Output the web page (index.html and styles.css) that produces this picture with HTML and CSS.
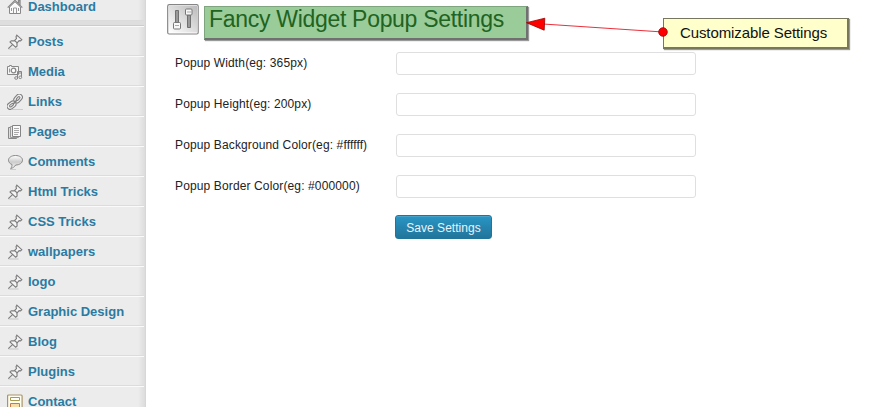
FILE: index.html
```html
<!DOCTYPE html>
<html lang="en">
<head>
<meta charset="utf-8">
<title>Fancy Widget Popup Settings</title>
<link rel="stylesheet" href="styles.css">
</head>
<body>
<svg class="defs" width="0" height="0" aria-hidden="true">
  <symbol id="pin" viewBox="0 0 16 16">
    <path d="M1.500 15h10" stroke="#c4c4c4"/>
    <path d="M9.800 1.200l5 4.500-1.300 1.100-1.400-.2-2.200 2.500.2 2.900-1.400 1.300L3 7.900l1.300-1.200 2.800.2 2.400-2.300-.5-1.900z" fill="#f4f4f4" stroke="#7c7c7c" stroke-width="1.100"/>
    <path d="M7.500 6.500l3 2.700M5.800 10.400L1.300 14.600" stroke="#7c7c7c" stroke-width="1.100" fill="none"/>
  </symbol>
</svg>
<div class="layout">
  <nav class="menu">
    <a class="item first"><svg class="icon" viewBox="0 0 16 16"><path d="M2.500 8v6.500h11V8L8 2.800z" fill="#fafafa" stroke="#888"/><path d="M.7 8.600L8 1.400l7.300 7.200M11.500 4V1.500h1.500V6" fill="none" stroke="#888" stroke-width="1.300"/><path d="M6.500 14V9h3v5M4.500 9v3M11.500 9v3" fill="none" stroke="#999"/></svg>Dashboard</a>
    <div class="separator"></div>
    <a class="item"><svg class="icon"><use href="#pin"/></svg>Posts</a>
    <a class="item"><svg class="icon" viewBox="0 0 16 16"><path d="M.5 2.500h2v-1h2v1h7v8H.5z" fill="#f6f6f6" stroke="#888"/><circle cx="6.500" cy="6.500" r="2.300" fill="#fff" stroke="#888" stroke-width="1.300"/><path d="M2.500 4.500v4" stroke="#999"/><path d="M10.500 14V7.500h4V13M10.500 9h4" fill="none" stroke="#858585"/><ellipse cx="9.200" cy="14" rx="1.500" ry="1.300" fill="#eee" stroke="#858585"/><ellipse cx="13.300" cy="13.300" rx="1.400" ry="1.300" fill="#eee" stroke="#858585"/></svg>Media</a>
    <a class="item"><svg class="icon" viewBox="0 0 16 16"><path d="M5 15.500h11" stroke="#ccc"/><g fill="#f2f2f2" stroke="#808080" stroke-width="1.100"><rect x="6.300" y="1.400" width="9.600" height="6.200" rx="3.100" transform="rotate(-48 11.100 4.500)"/><rect x="-.3" y="8.100" width="9.600" height="6.200" rx="3.100" transform="rotate(-38 4.500 11.200)"/><rect x="8.900" y="3.500" width="4.400" height="2" rx="1" fill="#ececec" transform="rotate(-48 11.100 4.500)"/><rect x="2.300" y="10.200" width="4.400" height="2" rx="1" fill="#ececec" transform="rotate(-38 4.500 11.200)"/></g><path d="M6 10.300l3.800-4.200" stroke="#808080" stroke-width="1.600"/></svg>Links</a>
    <a class="item"><svg class="icon" viewBox="0 0 16 16"><path d="M1.500 3.500h8v11h-8z" fill="#ddd" stroke="#888"/><path d="M3.500 2.500h8v11h-8z" fill="#e6e6e6" stroke="#999"/><path d="M5.500 1.500h8v11h-8z" fill="#fafafa" stroke="#858585"/><path d="M7 4.500h5M7 6.500h5M7 8.500h5M7 10.500h4" stroke="#aaa"/></svg>Pages</a>
    <a class="item"><svg class="icon" viewBox="0 0 16 16"><defs><linearGradient id="bubble" x2="0" y2="1"><stop stop-color="#fff"/><stop offset=".5" stop-color="#ccc"/><stop offset="1" stop-color="#fafafa"/></linearGradient></defs><path d="M3 15.500h6" stroke="#ccc"/><path d="M8.500 1.500c4 0 7 2 7 4.700s-3 4.800-6.800 4.800c-1.200 1.700-2.700 3-5 3.500 1-1.300 1.400-2.500 1.300-4C2.700 9.600 1.500 8 1.500 6.200c0-2.700 3-4.700 7-4.700z" fill="url(#bubble)" stroke="#888"/></svg>Comments</a>
    <a class="item"><svg class="icon"><use href="#pin"/></svg>Html Tricks</a>
    <a class="item"><svg class="icon"><use href="#pin"/></svg>CSS Tricks</a>
    <a class="item"><svg class="icon"><use href="#pin"/></svg>wallpapers</a>
    <a class="item"><svg class="icon"><use href="#pin"/></svg>logo</a>
    <a class="item"><svg class="icon"><use href="#pin"/></svg>Graphic Design</a>
    <a class="item"><svg class="icon"><use href="#pin"/></svg>Blog</a>
    <a class="item"><svg class="icon"><use href="#pin"/></svg>Plugins</a>
    <a class="item"><svg class="icon" viewBox="0 0 16 16"><rect x=".6" y="1" width="14.500" height="14.500" rx="1" fill="#fffdf0" stroke="#a8946c" stroke-width="1.200"/><path d="M3.500 3.500h9v3h-9z" fill="#fff" stroke="#a79b50"/><path d="M3.500 9.500h9v4h-9z" fill="#f6dda8" stroke="#c47a4c"/></svg>Contact</a>
  </nav>
  <main class="content">
    <header class="heading">
      <svg class="settings-icon" width="32" height="31" viewBox="0 0 32 31"><defs><linearGradient id="panel" x1="1" x2="0" y2="1"><stop stop-color="#bbb"/><stop offset=".5" stop-color="#ddd"/><stop offset="1" stop-color="#fff"/></linearGradient></defs><rect x=".7" y=".7" width="30.500" height="29.300" rx="1.500" fill="#fff" stroke="#858585" stroke-width="1.200"/><rect x="2" y="2" width="28" height="26.500" fill="url(#panel)"/><path d="M8.500 6.500h3V19h-3zM20.500 11h3v12.500h-3z" fill="#999" stroke="#707070"/><rect x="6.500" y="18.500" width="7" height="6.500" rx="1" fill="#f8f8f8" stroke="#777"/><rect x="18.500" y="5" width="6.500" height="6" rx="1" fill="#f8f8f8" stroke="#777"/><path d="M8 21.500h4M20 8h4" stroke="#aaa"/></svg>
      <h1 class="title">Fancy Widget Popup Settings</h1>
    </header>
    <form class="form">
      <label for="w">Popup Width(eg: 365px)</label><input id="w" type="text">
      <label for="h">Popup Height(eg: 200px)</label><input id="h" type="text">
      <label for="bg">Popup Background Color(eg: #ffffff)</label><input id="bg" type="text">
      <label for="bd">Popup Border Color(eg: #000000)</label><input id="bd" type="text">
      <button class="save" type="button">Save Settings</button>
    </form>
  </main>
</div>
<div class="callout">Customizable Settings</div>
<svg class="arrow" width="150" height="30" viewBox="0 0 150 30"><path d="M18 14L138 22" stroke="#e8323c" stroke-width="1.100"/><path d="M1.500 12.700l18.300-4.500-.6 12z" fill="#f00" stroke="#900" stroke-width=".8"/><circle cx="138" cy="22" r="4.300" fill="#f00" stroke="#900" stroke-width=".8"/></svg>
</body>
</html>
```
FILE: styles.css
```css
* { box-sizing: border-box; }
html, body { height: 100%; }
body {
  margin: 0;
  overflow: hidden;
  background: #fff;
  color: #222;
  font-family: "Liberation Sans", Arial, sans-serif;
  font-size: 12px;
}
.defs { position: absolute; }
.layout { display: flex; height: 407px; overflow: hidden; }
.menu {
  width: 146px;
  flex: none;
  height: 407px;
  overflow: hidden;
  padding-right: 2px;
  background: linear-gradient(to right, #ececec 138px, #dcdcdc 145px, #d2d2d2);
}
.item {
  display: flex;
  align-items: center;
  gap: 5px;
  height: 30px;
  padding: 1px 0 0 7px;
  border-top: 1px solid #fafafa;
  border-bottom: 1px solid #dcdcdc;
  color: #2a7ba3;
  font-size: 13px;
  font-weight: bold;
  white-space: nowrap;
}
.item.first { margin-top: -9px; }
.icon { width: 16px; height: 16px; flex: none; fill: none; }
.separator { height: 5px; background: #dedede; border-bottom: 1px solid #ccc; }
.content { flex: 1; padding: 4px 0 0 21px; }
.heading { display: flex; gap: 5px; height: 48px; }
.settings-icon { flex: none; }
.title {
  width: 324px;
  height: 34px;
  margin: 2px 0 0;
  padding-left: 4px;
  background: #99cc99;
  border: 1px solid;
  border-width: 1px 2px 2px 1px;
  border-color: #7fa57f #707070 #707070 #7fa57f;
  box-shadow: 1px 1px 1px #999;
  color: #216321;
  font-size: 23px;
  font-weight: normal;
  line-height: 24px;
  letter-spacing: -.3px;
  white-space: nowrap;
}
.form {
  display: grid;
  grid-template-columns: 221px 300px;
  row-gap: 18px;
  padding-left: 8px;
}
.form label { line-height: 22px; letter-spacing: .13px; white-space: nowrap; }
.form input {
  width: 300px;
  height: 23px;
  margin: 0;
  border: 1px solid #dfdfdf;
  border-radius: 3px;
  background: #fff;
}
.save {
  grid-column: 2;
  width: 97px;
  height: 24px;
  margin: -1px 0 0 -1px;
  padding: 1px 0 0;
  border: 1px solid #21759b;
  border-radius: 3px;
  background: linear-gradient(#2a95c5, #21759b);
  box-shadow: inset 0 1px 0 #48a3cb;
  color: #e8f4fa;
  font-family: inherit;
  font-size: 12px;
  letter-spacing: .05px;
}
.callout {
  position: absolute;
  left: 663px;
  top: 18px;
  width: 186px;
  height: 31px;
  padding-left: 16px;
  background: #ffffcc;
  border: 1px solid #77775f;
  border-width: 1px 2px 2px 1px;
  box-shadow: 1px 1px 1px #999;
  color: #111;
  font-size: 15px;
  line-height: 28px;
  letter-spacing: -.1px;
  white-space: nowrap;
}
.arrow { position: absolute; left: 525px; top: 10px; fill: none; }
```
